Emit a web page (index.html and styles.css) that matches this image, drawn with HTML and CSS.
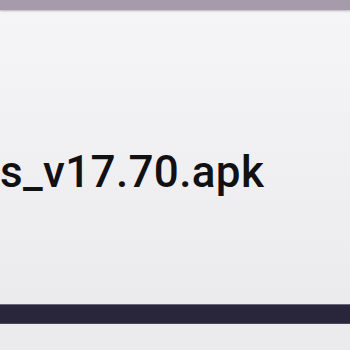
FILE: index.html
```html
<!DOCTYPE html>
<html>
<head>
<meta charset="utf-8">
<link rel="stylesheet" href="styles.css">
</head>
<body>
<div class="screen">
  <div class="topbar"></div>
  <div class="panel">
    <div class="filename">s_v17.70.apk</div>
  </div>
  <div class="darkbar"></div>
  <div class="bottom"></div>
</div>
</body>
</html>
```
FILE: styles.css
```css
html, body {
  margin: 0;
  padding: 0;
  width: 350px;
  height: 350px;
  overflow: hidden;
}
.screen {
  display: flex;
  flex-direction: column;
  width: 350px;
  height: 350px;
  background: #ebebed;
}
.topbar {
  height: 10px;
  background: #a69bab;
  box-shadow: 0 1px 2px rgba(60, 50, 70, 0.35);
  position: relative;
  z-index: 1;
}
.panel {
  height: 294px;
  background: linear-gradient(#f5f5f7, #efeff1 60%, #ebebed);
  display: flex;
  align-items: flex-start;
}
.filename {
  margin-top: 136px;
  padding-left: 0;
  font-family: Roboto, "Liberation Sans", sans-serif;
  font-size: 44px;
  font-weight: 500;
  letter-spacing: 0.35px;
  line-height: 52px;
  color: #111114;
  white-space: nowrap;
}
.darkbar {
  height: 20px;
  background: #29253a;
  border-top: 1px solid #6a6678;
  border-bottom: 1px solid #4a4656;
  box-sizing: border-box;
}
.bottom {
  flex: 1;
  background: #ebebed;
}
```
